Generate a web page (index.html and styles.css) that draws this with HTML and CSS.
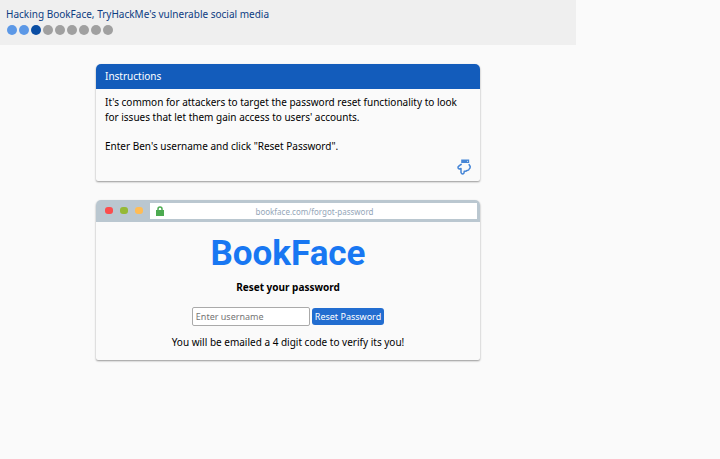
FILE: index.html
```html
<!DOCTYPE html>
<html lang="en">
<head>
<meta charset="utf-8">
<title>Hacking BookFace</title>
<link rel="stylesheet" href="styles.css">
</head>
<body>
<div class="app">
  <header class="topbar">
    <h1 class="title">Hacking BookFace, TryHackMe's vulnerable social media</h1>
    <div class="steps">
      <span class="step done"></span><span class="step done"></span><span class="step current"></span><span class="step"></span><span class="step"></span><span class="step"></span><span class="step"></span><span class="step"></span><span class="step"></span>
    </div>
  </header>
  <main class="content">
    <section class="card">
      <h2 class="card-head">Instructions</h2>
      <div class="card-body">
        <p>It's common for attackers to target the password reset functionality to look for issues that let them gain access to users' accounts.</p>
        <p>Enter Ben's username and click "Reset Password".</p>
      </div>
      <svg class="hand" viewBox="0 0 14 16" width="14" height="16">
        <path class="cuff" d="M4.200 .5H12.200V4H4.200Z"/>
        <path class="outline" d="M4.800 5.200 3.400 5.800L1.200 7.600Q.6 9.600 2.300 9.900L4 9.500V13.500Q4.500 15 5.900 14.900Q7.200 14.600 7.200 13V12.200Q9.400 12.600 10 11.400Q12 11.500 12.200 10Q13.400 9.200 13.200 7.500L11.800 5.200"/>
        <circle class="button" cx="10.500" cy="2.200" r=".5"/>
      </svg>
    </section>
    <section class="card">
      <div class="chrome">
        <span class="dot red"></span><span class="dot green"></span><span class="dot amber"></span>
        <div class="address">
          <svg class="lock" viewBox="0 0 8 10" width="8" height="10">
            <path class="shackle" d="M2 5V3a2 2 0 0 1 4 0v2"/>
            <path class="lock-body" d="M0 4h8v6H0z"/>
          </svg>
          <span class="url">bookface.com/forgot-password</span>
        </div>
      </div>
      <div class="page">
        <div class="logo">BookFace</div>
        <h3 class="subtitle">Reset your password</h3>
        <form class="form">
          <input class="field" type="text" placeholder="Enter username" aria-label="Username">
          <button class="submit" type="button">Reset Password</button>
        </form>
        <p class="note">You will be emailed a 4 digit code to verify its you!</p>
      </div>
    </section>
  </main>
</div>
</body>
</html>
```
FILE: styles.css
```css
* { box-sizing: border-box; }
body {
  margin: 0;
  background: #fafafa;
  color: #000;
  font: 10px/15px "Noto Sans", sans-serif;
}
h1, h2, h3, p { margin: 0; font-size: inherit; font-weight: 400; }
.app { width: 80%; }
.topbar { padding: 7px 6px 10px; background: #efefef; }
.title { color: #0d3c82; }
.steps { display: flex; gap: 2px; padding: 3px 0 0 1px; }
.step { width: 10px; height: 10px; border-radius: 50%; background: #a0a0a0; }
.step.done { background: #5c98e6; }
.step.current { background: #0a4da3; }
.content {
  display: flex;
  flex-direction: column;
  gap: 19px;
  padding: 19px calc(100% / 6);
}
.card {
  border-radius: 5px 5px 2px 2px;
  box-shadow: 0 1px 2px rgba(0, 0, 0, .4);
  overflow: hidden;
}
.card-head { padding: 5px 9px; background: #135cbb; color: #fff; }
.card-body { display: grid; gap: 14px; padding: 6px 9px 0; }
.hand { display: block; margin: 5px 9px 6px auto; }
.cuff { fill: #4585d6; }
.button { fill: #fafafa; }
.outline { fill: none; stroke: #4585d6; stroke-width: 1.5; stroke-linejoin: round; }
.chrome {
  display: flex;
  align-items: center;
  gap: 7px;
  height: 22px;
  padding: 0 3px 0 9px;
  background: #bac7d0;
}
.dot { width: 8px; height: 7px; margin-bottom: 2px; border-radius: 3px; }
.red { background: #fb4d4d; }
.green { background: #95b935; }
.amber { background: #ffbc55; }
.address {
  display: flex;
  flex: 1;
  align-items: center;
  height: 16px;
  padding: 0 12px 0 6px;
  background: #fff;
}
.lock-body { fill: #4caa50; }
.shackle { fill: none; stroke: #4caa50; stroke-width: 1.5; }
.url { flex: 1; color: #94a6b8; font-size: 8px; text-align: center; }
.page { padding: 11px 10px 10px; text-align: center; }
.logo { color: #1877f2; font: 700 35px/42px Roboto, sans-serif; }
.subtitle { padding-top: 5px; font-weight: 700; }
.form { display: flex; justify-content: center; gap: 2px; padding: 12px 0 9px; }
.field {
  width: 118px;
  height: 19px;
  padding: 0 3px;
  border: 1px solid #aaa;
  border-radius: 2px;
  background: #fff;
  font: inherit;
  font-size: 9px;
}
.field::placeholder { color: #757575; }
.submit {
  height: 17px;
  margin-top: 1px;
  padding: 0 3px;
  border: 0;
  border-radius: 3px;
  background: #226dd0;
  color: #fff;
  font: inherit;
  font-size: 9px;
}
```
